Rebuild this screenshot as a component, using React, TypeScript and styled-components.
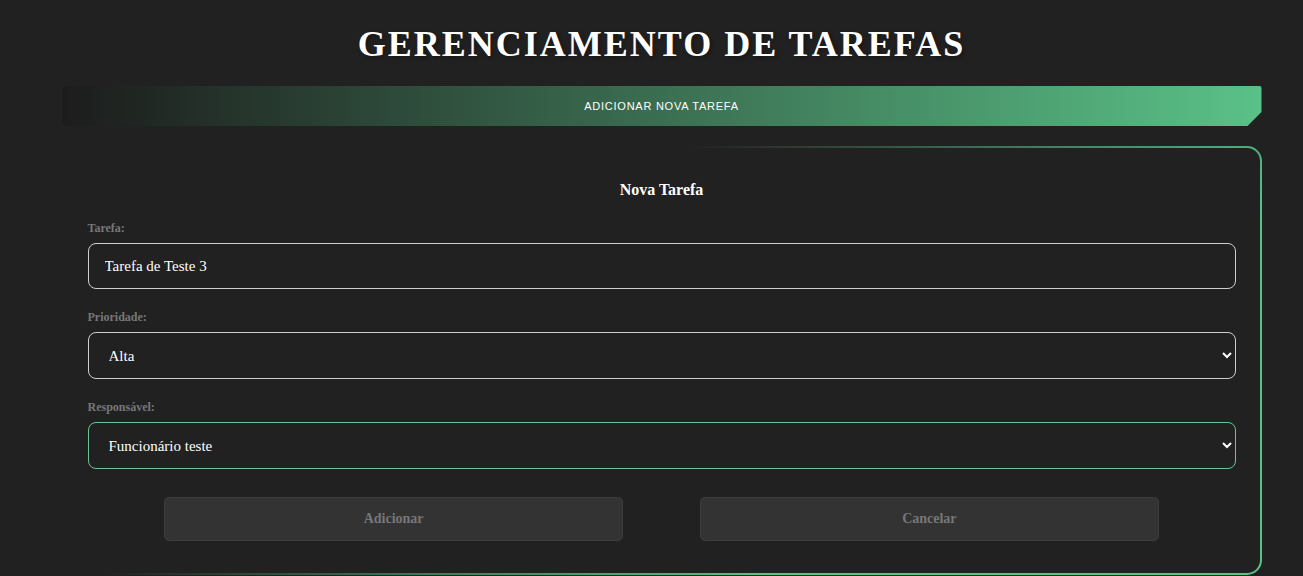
import React from "react";
import styled, { createGlobalStyle } from "styled-components";

const Global = createGlobalStyle`
  html, body { margin: 0; padding: 0; background: #212121; }
  body { font-family: "Liberation Serif", "Times New Roman", serif; color: #fff; }
  * { box-sizing: border-box; }
`;

const Page = styled.div`
  min-height: 576px;
  padding: 22px 0 0 20px;
  display: flex;
  flex-direction: column;
  align-items: center;
`;

const Container = styled.div`
  width: 1200px;
  display: flex;
  flex-direction: column;
`;

const Title = styled.h1`
  margin: 0 0 20px;
  text-align: center;
  font-family: "Liberation Serif", serif;
  font-weight: 700;
  font-size: 36px;
  line-height: 44px;
  letter-spacing: 2px;
  color: #fff;
  text-shadow: 2px 2px 4px rgba(0, 0, 0, 0.35);
`;

const Banner = styled.div`
  height: 40px;
  display: flex;
  align-items: center;
  justify-content: center;
  border-radius: 4px 3px 0 4px;
  background: linear-gradient(90deg, #1c1c1c 0%, #5ac187 100%);
  clip-path: polygon(0 0, 100% 0, 100% 26px, calc(100% - 14px) 100%, 0 100%);
  font-family: "Liberation Sans", Arial, sans-serif;
  font-size: 11px;
  letter-spacing: 0.75px;
  color: #fff;
  margin-bottom: 20px;
`;

const Card = styled.div`
  border: 2px solid transparent;
  border-radius: 15px;
  background:
    linear-gradient(#212121, #212121) padding-box,
    linear-gradient(144deg, rgba(90, 193, 135, 0) 35%, rgba(90, 193, 135, 0.6) 55%, #5ac187 72%) border-box;
  padding: 33px 24px 32px;
`;

const CardTitle = styled.h2`
  margin: 0 0 22px;
  text-align: center;
  font-size: 16px;
  line-height: 18px;
  font-weight: 700;
  color: #fff;
`;

const Group = styled.div`
  display: flex;
  flex-direction: column;
  margin-bottom: 21px;
`;

const Label = styled.label`
  font-size: 12px;
  line-height: 14px;
  font-weight: 700;
  color: #777;
  margin-bottom: 8px;
`;

const Input = styled.input`
  height: 46px;
  padding: 0 16px;
  border: 1px solid #cfcfcf;
  border-radius: 8px;
  background: #212121;
  color: #fff;
  font-family: "Liberation Serif", serif;
  font-size: 15px;
  outline: none;
`;

const Select = styled.select<{ $active?: boolean }>`
  height: 47px;
  padding: 0 16px;
  border: 1px solid ${(p) => (p.$active ? "#6cc393" : "#cfcfcf")};
  border-radius: 8px;
  background: #212121;
  color: #fff;
  color-scheme: dark;
  font-family: "Liberation Serif", serif;
  font-size: 15px;
  outline: none;
`;

const Buttons = styled.div`
  display: flex;
  justify-content: space-evenly;
  margin-top: 28px;
`;

const Button = styled.button`
  width: 40%;
  height: 44px;
  border: 1px solid #3d3d3d;
  border-radius: 5px;
  background: #333;
  color: #777;
  font-family: "Liberation Serif", serif;
  font-weight: 700;
  font-size: 14px;
`;

export default function App() {
  return (
    <>
      <Global />
      <Page>
        <Container>
          <Title>GERENCIAMENTO DE TAREFAS</Title>
          <Banner>ADICIONAR NOVA TAREFA</Banner>
          <Card>
            <CardTitle>Nova Tarefa</CardTitle>
            <Group>
              <Label>Tarefa:</Label>
              <Input defaultValue="Tarefa de Teste 3" />
            </Group>
            <Group>
              <Label>Prioridade:</Label>
              <Select defaultValue="Alta">
                <option>Baixa</option>
                <option>Média</option>
                <option>Alta</option>
              </Select>
            </Group>
            <Group>
              <Label>Responsável:</Label>
              <Select $active defaultValue="Funcionário teste">
                <option>Funcionário teste</option>
              </Select>
            </Group>
            <Buttons>
              <Button>Adicionar</Button>
              <Button>Cancelar</Button>
            </Buttons>
          </Card>
        </Container>
      </Page>
    </>
  );
}
